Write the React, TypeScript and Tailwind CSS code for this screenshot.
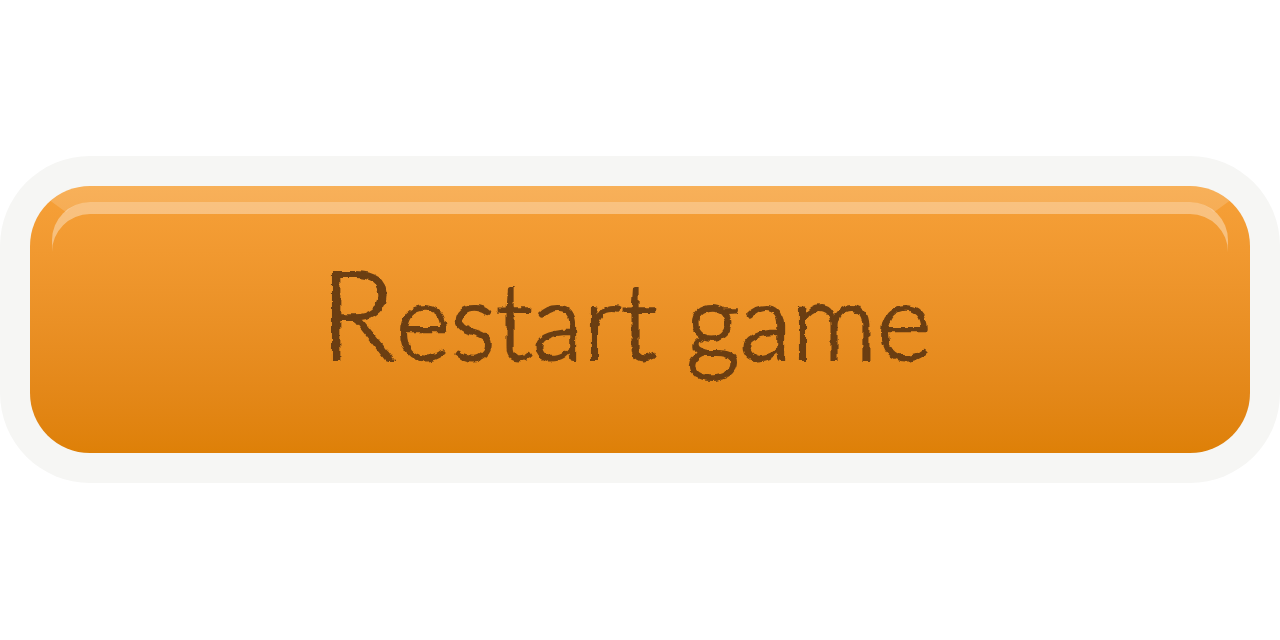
type GameButtonProps = {
  label: string;
  onClick?: () => void;
};

const RoughEdges = () => (
  <svg width="0" height="0" className="absolute" aria-hidden="true">
    <filter id="rough" x="-2%" y="-5%" width="104%" height="110%" colorInterpolationFilters="sRGB">
      <feTurbulence type="fractalNoise" baseFrequency="0.14" numOctaves="2" seed="4" result="noise" />
      <feDisplacementMap in="SourceGraphic" in2="noise" scale="5" xChannelSelector="R" yChannelSelector="G" />
    </filter>
  </svg>
);

const GameButton = ({ label, onClick }: GameButtonProps) => {
  return (
    <div className="w-full rounded-[90px] bg-[#f6f6f4] p-[30px]">
      {/* the top border is the outer shine, the inset shadow is the bright one */}
      <button
        type="button"
        onClick={onClick}
        className="block w-full cursor-pointer rounded-[60px] border-x-[22px] border-t-[16px] border-x-transparent border-t-white/16 bg-linear-to-b from-[#f7a139] to-[#de8007] bg-origin-border"
      >
        <span className="block rounded-t-[38px] pt-[57px] pr-7 pb-[74px] shadow-[inset_0_12px_0_rgba(255,255,255,0.37)]">
          <span className="block font-[Papyrus,Lato,sans-serif] text-[106px] leading-[120px] font-light text-[#6b3e12] [-webkit-text-stroke:2px_#6b3e12] [filter:url(#rough)] first-letter:text-[124px] first-letter:leading-[100px]">
            {label}
          </span>
        </span>
      </button>
    </div>
  );
};

export default function App() {
  return (
    <main className="flex min-h-screen items-center bg-white pb-px">
      <RoughEdges />
      <GameButton label="Restart game" />
    </main>
  );
}
